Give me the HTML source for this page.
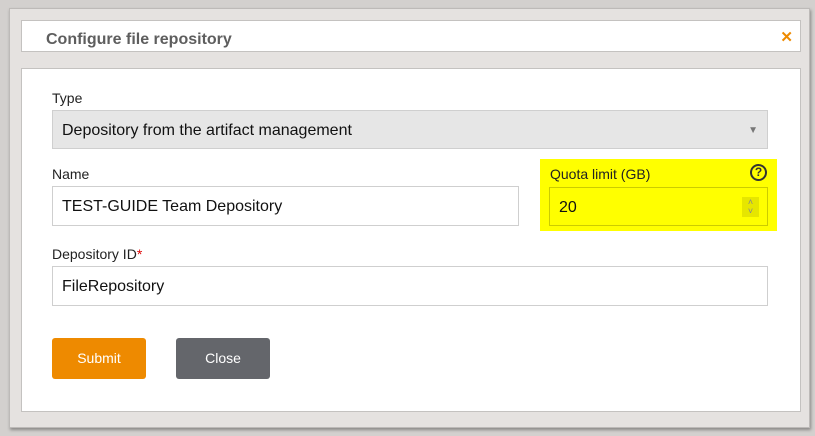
<!DOCTYPE html>
<html><head><style>
*{box-sizing:border-box;margin:0;padding:0}
body{width:815px;height:436px;background:#d3d0ce;font-family:"Liberation Sans",sans-serif;position:relative;overflow:hidden}
.dlg{position:absolute;left:9px;top:8px;width:801px;height:420px;background:#e5e2e0;border:1px solid #bdbab8;box-shadow:1px 2px 3px rgba(0,0,0,.35)}
.hdr{position:absolute;left:21px;top:20px;width:780px;height:32px;background:#fff;border:1px solid #c4c2c0}
.hdr h1{position:absolute;left:24px;top:10px;font-size:16px;font-weight:bold;color:#5e5e5e}
.x{position:absolute;right:7px;top:7px;color:#ee8a00;font-size:15px;font-weight:bold}
.bd{position:absolute;left:21px;top:68px;width:780px;height:344px;background:#fff;border:1px solid #c4c2c0}
.lbl{position:absolute;font-size:14px;color:#222}
.inp{position:absolute;border:1px solid #cfcfcf;background:#fff;font-size:16px;color:#111;padding-left:9px;padding-top:2px;line-height:36px}
.btn{position:absolute;top:338px;height:41px;width:94px;border-radius:3px;color:#fff;font-size:14px;text-align:center;line-height:41px}
</style></head><body>
<div class="dlg"></div>
<div class="hdr"><h1>Configure file repository</h1><span class="x">✕</span></div>
<div class="bd"></div>
<div class="lbl" style="left:52px;top:90px">Type</div>
<div class="inp" style="left:52px;top:110px;width:716px;height:39px;background:#e6e6e6">Depository from the artifact management<span style="position:absolute;right:9px;top:2px;font-size:10px;color:#777">▼</span></div>
<div class="lbl" style="left:52px;top:166px">Name</div>
<div class="inp" style="left:52px;top:186px;width:467px;height:40px">TEST-GUIDE Team Depository</div>
<div style="position:absolute;left:540px;top:159px;width:237px;height:72px;background:#ffff00"></div>
<div class="lbl" style="left:550px;top:166px">Quota limit (GB)</div>
<div style="position:absolute;left:750px;top:164px;width:17px;height:17px;border:2px solid #333;border-radius:50%;font-size:12px;font-weight:bold;text-align:center;line-height:13px;color:#333">?</div>
<div class="inp" style="left:549px;top:187px;width:219px;height:39px;background:#ffff00;border-color:#cccc00">20<span style="position:absolute;right:8px;top:9px;width:17px;height:20px;background:#e6e600;font-size:9px;line-height:9px;color:#888;text-align:center;padding-top:1px">˄<br>˅</span></div>
<div class="lbl" style="left:52px;top:246px">Depository ID<span style="color:#d00">*</span></div>
<div class="inp" style="left:52px;top:266px;width:716px;height:40px">FileRepository</div>
<div class="btn" style="left:52px;background:#ee8a00">Submit</div>
<div class="btn" style="left:176px;background:#64666b">Close</div>
</body></html>
